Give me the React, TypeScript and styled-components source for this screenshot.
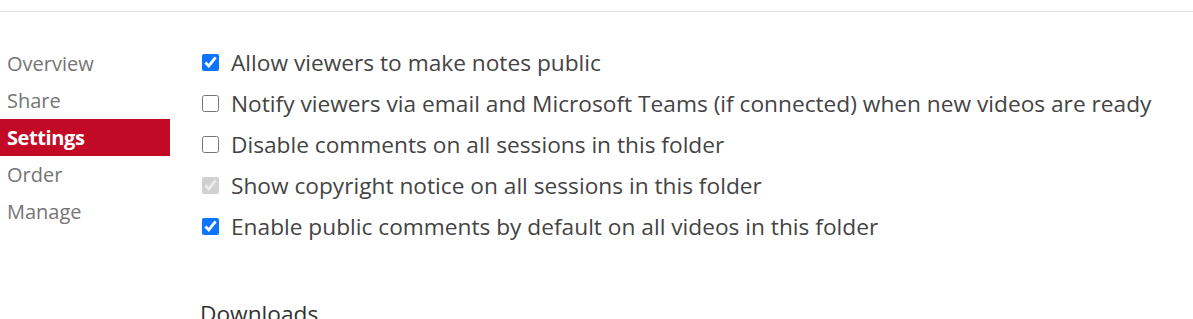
import React from "react";
import styled, { createGlobalStyle } from "styled-components";

const GlobalStyle = createGlobalStyle`
  body {
    margin: 0;
    background: #fff;
    font-family: "Open Sans", "Noto Sans", sans-serif;
    overflow: hidden;
  }
`;

const TopBar = styled.div`
  height: 11px;
  border-bottom: 1px solid #e1e1e1;
`;

const Layout = styled.div`
  display: flex;
  padding-top: 34px;
`;

const Nav = styled.nav`
  width: 170px;
  flex-shrink: 0;
  display: flex;
  flex-direction: column;
  margin-top: -1px;
`;

const NavItem = styled.div<{ $active?: boolean }>`
  height: 37px;
  line-height: 37px;
  padding-left: 7px;
  font-size: 20px;
  color: ${(p) => (p.$active ? "#fff" : "#757575")};
  background: ${(p) => (p.$active ? "#c20a27" : "transparent")};
  font-weight: ${(p) => (p.$active ? 700 : 400)};
  letter-spacing: ${(p) => (p.$active ? "-0.4px" : "0")};
`;

const Main = styled.div`
  padding-left: 30px;
  display: flex;
  flex-direction: column;
`;

const Options = styled.div`
  display: flex;
  flex-direction: column;
  margin-top: -4px;
`;

const Option = styled.label`
  display: flex;
  align-items: center;
  height: 41px;
  font-size: 22.7px;
  color: #444;
  white-space: nowrap;
`;

const Box = styled.input`
  width: 17px;
  height: 17px;
  margin: 0 12px 0 2px;
  accent-color: #0b75ff;
`;

const Heading = styled.h3`
  margin: 51px 0 0 0;
  font-size: 22.7px;
  font-weight: 400;
  color: #333;
`;

const options = [
  { text: "Allow viewers to make notes public", checked: true },
  { text: "Notify viewers via email and Microsoft Teams (if connected) when new videos are ready", checked: false },
  { text: "Disable comments on all sessions in this folder", checked: false },
  { text: "Show copyright notice on all sessions in this folder", checked: true, disabled: true },
  { text: "Enable public comments by default on all videos in this folder", checked: true },
];

export default function App() {
  return (
    <>
      <GlobalStyle />
      <TopBar />
      <Layout>
        <Nav>
          <NavItem>Overview</NavItem>
          <NavItem>Share</NavItem>
          <NavItem $active>Settings</NavItem>
          <NavItem>Order</NavItem>
          <NavItem>Manage</NavItem>
        </Nav>
        <Main>
          <Options>
            {options.map((o) => (
              <Option key={o.text}>
                <Box type="checkbox" defaultChecked={o.checked} disabled={o.disabled} />
                {o.text}
              </Option>
            ))}
          </Options>
          <Heading>Downloads</Heading>
        </Main>
      </Layout>
    </>
  );
}
